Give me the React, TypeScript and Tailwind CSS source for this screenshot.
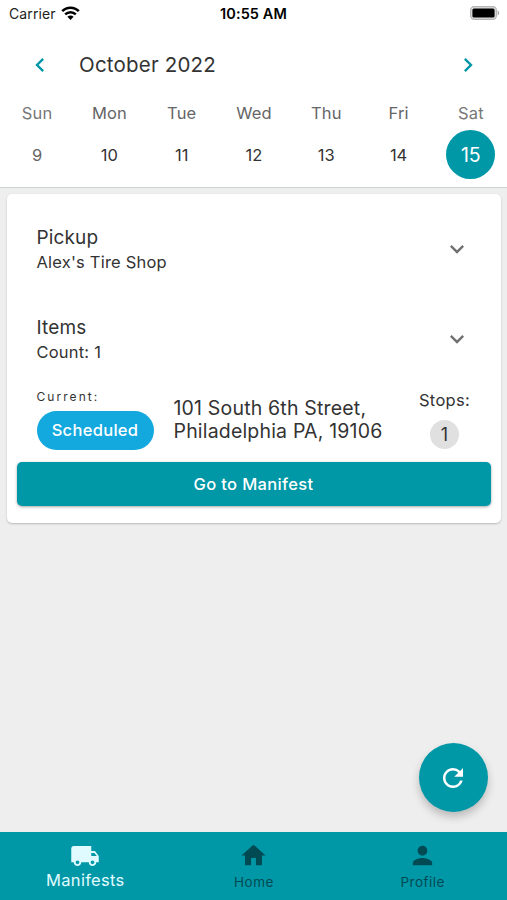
import React from "react";
import {
  MdChevronLeft,
  MdChevronRight,
  MdExpandMore,
  MdHome,
  MdLocalShipping,
  MdPerson,
  MdRefresh,
} from "react-icons/md";

const days = [
  { label: "Sun", date: 9, muted: true },
  { label: "Mon", date: 10 },
  { label: "Tue", date: 11 },
  { label: "Wed", date: 12 },
  { label: "Thu", date: 13 },
  { label: "Fri", date: 14 },
  { label: "Sat", date: 15, muted: true, selected: true },
];

const tabs = [
  { name: "Manifests", icon: MdLocalShipping, active: true },
  { name: "Home", icon: MdHome, active: false },
  { name: "Profile", icon: MdPerson, active: false },
];

function StatusBar() {
  return (
    <div className="grid h-7 grid-cols-3 items-center pl-[9px] pr-[7px] text-black">
      <div className="-mt-px flex items-center gap-[5px] text-[14px] text-[#222]">
        <span className="tracking-[0.1px]">Carrier</span>
        {/* wifi */}
        <svg width="19" height="14" viewBox="0 0 19 14" fill="none" className="-mt-[2px]">
          <path d="M1.2 5.2C5.8.5 13.2.5 17.8 5.2" stroke="#000" strokeWidth="2.6" />
          <path d="M4.2 8.4c3-3 7.6-3 10.6 0" stroke="#000" strokeWidth="2.5" />
          <path d="M9.5 13.9 6.4 10.8c1.7-1.6 4.5-1.6 6.2 0z" fill="#000" />
        </svg>
      </div>
      <div className="-ml-[2px] -mt-px text-center text-[14.5px] font-semibold tracking-[0.1px]">10:55 AM</div>
      <div className="-mt-[2px] flex justify-end">
        <svg width="30" height="14" viewBox="0 0 30 14">
          <rect x="0.6" y="0.6" width="25.8" height="12.8" rx="3.6" fill="#ddd" stroke="#b5b5b5" strokeWidth="1.2" />
          <rect x="2.4" y="2.4" width="22.2" height="9.2" rx="1.6" fill="#000" />
          <path d="M27.6 4.6c2.2.6 2.2 4.2 0 4.8z" fill="#a8a8a8" />
        </svg>
      </div>
    </div>
  );
}

function Calendar() {
  return (
    <div className="flex h-40 flex-col border-b border-[#cdd2d2]">
      <div className="flex h-[73px] items-center pl-[26px] pr-[25px]">
        <MdChevronLeft size={28} className="text-[#0097a7]" />
        <h1 className="ml-[25px] flex-1 pt-[2px] text-[20.5px] tracking-[0.2px] text-[#333]">October 2022</h1>
        <MdChevronRight size={28} className="text-[#0097a7]" />
      </div>
      <div className="grid grid-cols-7 pl-px">
        {days.map((d) => (
          <div key={d.label} className="flex flex-col items-center">
            <span
              className={`h-[29px] text-[16.5px] leading-6 tracking-[0.15px] ${
                d.muted ? "text-[#777]" : "text-[#666]"
              }`}
            >
              {d.label}
            </span>
            <span
              className={`flex h-[49px] w-[49px] items-center justify-center rounded-full ${
                d.selected
                  ? "bg-[#0097a7] pt-[2px] text-[19.5px] text-white"
                  : d.muted
                  ? "pt-[2px] text-[16.5px] text-[#666]"
                  : "pt-[2px] text-[16.5px] text-[#333]"
              }`}
            >
              {d.date}
            </span>
          </div>
        ))}
      </div>
    </div>
  );
}

function ExpandRow({ title, detail }: { title: string; detail: string }) {
  return (
    <div className="flex h-[90px] items-center justify-between pl-[30px] pr-[30px]">
      <div className="text-[#333]">
        <div className="pt-px text-[19px] leading-[25px] tracking-[0.15px]">{title}</div>
        <div className="text-[16.5px] leading-6 tracking-[0.2px]">{detail}</div>
      </div>
      <MdExpandMore size={28} className="text-[#707070]" />
    </div>
  );
}

function ManifestCard() {
  return (
    <div className="mx-[6.5px] mt-1.5 h-[329px] rounded-[5px] bg-white pt-[10px] shadow-[0_1px_2px_rgba(0,0,0,0.22)]">
      <ExpandRow title="Pickup" detail="Alex's Tire Shop" />
      <ExpandRow title="Items" detail="Count: 1" />
      <div className="flex h-[78px] pl-[30px] text-[#333]">
        <div className="w-[137px]">
          <div className="pt-[5px] text-[12px] leading-4 tracking-[2.05px]">Current:</div>
          <div className="mt-[6px] flex h-[39px] w-[117px] items-center justify-center rounded-full bg-[#14a9de] pb-px text-[16.5px] font-medium tracking-[0.3px] text-white">
            Scheduled
          </div>
        </div>
        <div className="w-[230px] pt-[13px] text-[19.5px] leading-[23px] tracking-[0.18px]">
          101 South 6th Street,
          <br />
          Philadelphia PA, 19106
        </div>
        <div className="flex w-[82px] flex-col items-center pt-[4px]">
          <span className="text-[16.5px] leading-6 tracking-[0.3px]">Stops:</span>
          <span className="mt-2 flex h-[29px] w-[29px] items-center justify-center rounded-full bg-[#e0e0e0] text-[18px]">
            1
          </span>
        </div>
      </div>
      <button className="mx-[10px] flex h-11 w-[474px] items-center justify-center rounded-[5px] bg-[#0097a7] text-[16.5px] font-medium tracking-[0.35px] text-white shadow-[0_1px_3px_rgba(0,0,0,0.35)]">
        Go to Manifest
      </button>
    </div>
  );
}

function TabBar() {
  return (
    <nav className="grid h-[68px] grid-cols-3 bg-[#0097a7] pl-px">
      {tabs.map((t) => {
        const Icon = t.icon;
        return (
          <div
            key={t.name}
            className={`flex flex-col items-center pt-[9px] ${t.active ? "text-[#e0fbff]" : "text-[#004b53]"}`}
          >
            <Icon size={t.active ? 30 : 29} />
            <span
              className={
                t.active
                  ? "-mt-[2px] text-[16.5px] leading-[22px] tracking-[0.3px]"
                  : "pt-px text-[13.5px] leading-[22px] tracking-[0.5px]"
              }
            >
              {t.name}
            </span>
          </div>
        );
      })}
    </nav>
  );
}

export default function App() {
  return (
    <div className="relative flex h-[900px] w-[507px] flex-col overflow-hidden bg-[#eee] font-['Inter',sans-serif]">
      <header className="bg-white">
        <StatusBar />
        <Calendar />
      </header>
      <main className="flex-1">
        <ManifestCard />
      </main>
      <TabBar />
      <button className="absolute bottom-[88px] right-[19.5px] flex h-[69px] w-[69px] items-center justify-center rounded-full bg-[#0097a7] text-white shadow-[0_5px_9px_rgba(0,0,0,0.22)]">
        <MdRefresh size={30} />
      </button>
    </div>
  );
}
